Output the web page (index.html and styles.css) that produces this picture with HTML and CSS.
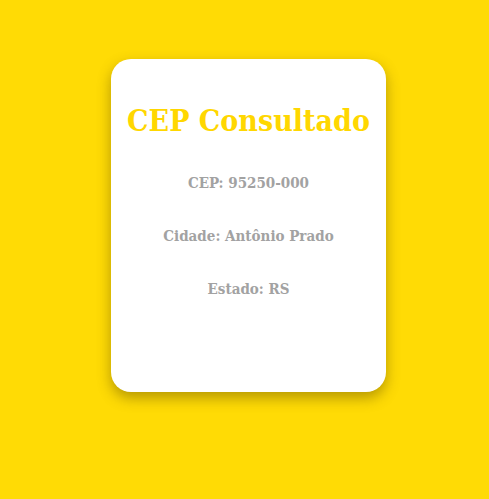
FILE: index.html
```html
<!DOCTYPE html>
<html lang="pt-BR">
<head>
<meta charset="utf-8">
<link rel="stylesheet" href="styles.css">
</head>
<body>
<main class="page">
  <section class="card">
    <h1 class="title">CEP Consultado</h1>
    <p class="info">CEP: 95250-000</p>
    <p class="info">Cidade: Antônio Prado</p>
    <p class="info">Estado: RS</p>
  </section>
</main>
</body>
</html>
```
FILE: styles.css
```css
html, body {
  margin: 0;
  padding: 0;
  background: #FFDB05;
}
body {
  font-family: "DejaVu Serif Condensed", "DejaVu Serif", serif;
  min-height: 499px;
}
.page {
  display: flex;
  justify-content: center;
  padding: 59px 0 0 8px;
}
.card {
  box-sizing: border-box;
  width: 275px;
  height: 333px;
  background: #fff;
  border-radius: 20px;
  box-shadow: 0 6px 14px rgba(90, 70, 0, 0.45);
  text-align: center;
  padding-top: 42px;
}
.title {
  margin: 0 0 31px;
  font-size: 30px;
  line-height: 40px;
  font-weight: bold;
  color: #FFD700;
}
.info {
  margin: 0 0 31px;
  font-size: 15px;
  line-height: 22px;
  font-weight: bold;
  color: #a2a2a2;
}
```
